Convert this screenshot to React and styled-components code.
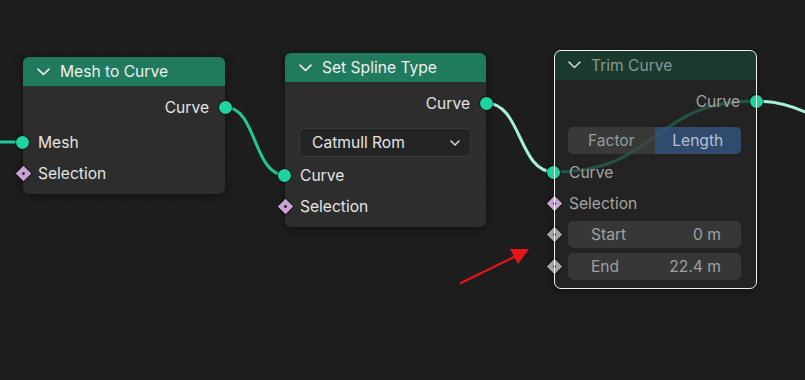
import React from "react";
import styled, { createGlobalStyle } from "styled-components";

const GlobalStyle = createGlobalStyle`
  html, body {
    margin: 0;
    padding: 0;
    background: #1d1d1d;
  }
  body {
    font-family: Inter, "Noto Sans", "DejaVu Sans", sans-serif;
  }
`;

const Canvas = styled.div`
  position: relative;
  width: 805px;
  height: 380px;
  overflow: hidden;
  background-color: #1d1d1d;
  background-image: radial-gradient(rgba(255, 255, 255, 0.022) 1px, transparent 1.3px);
  background-size: 26px 26px;
  background-position: 6px 10px;
`;

const Wires = styled.svg`
  position: absolute;
  inset: 0;
  z-index: 0;
`;

const Overlay = styled.svg`
  position: absolute;
  inset: 0;
  z-index: 3;
  pointer-events: none;
`;

const Node = styled.div`
  position: absolute;
  left: ${(p) => p.$x}px;
  top: ${(p) => p.$y}px;
  width: ${(p) => p.$w}px;
  z-index: 1;
  display: flex;
  flex-direction: column;
  border-radius: 6px;
  background: ${(p) => (p.$muted ? "rgba(38, 38, 38, 0.7)" : "#2d2d2d")};
  box-shadow: 0 2px 10px rgba(0, 0, 0, 0.45);
  padding-bottom: ${(p) => p.$pb || 6}px;
  &::after {
    content: "";
    display: ${(p) => (p.$selected ? "block" : "none")};
    position: absolute;
    inset: -0.5px;
    border: 1.5px solid #f2f2f2;
    border-radius: 7px;
    pointer-events: none;
  }
`;

const Header = styled.div`
  height: ${(p) => p.$h || 29}px;
  display: flex;
  align-items: center;
  gap: 10px;
  padding-left: 14px;
  border-radius: 6px 6px 0 0;
  background: ${(p) => (p.$muted ? "#1a3a30" : "#1f7a5e")};
  color: ${(p) => (p.$muted ? "#8a9791" : "#f0f0f0")};
  font-size: 15.6px;
  margin-bottom: 6px;
`;

const Chevron = ({ color }) => (
  <svg width="13" height="8" viewBox="0 0 13 8">
    <path d="M1 1.2 L6.5 6.5 L12 1.2" fill="none" stroke={color} strokeWidth="1.6" strokeLinecap="round" strokeLinejoin="round" />
  </svg>
);

const Row = styled.div`
  position: relative;
  height: 31px;
  display: flex;
  align-items: center;
  justify-content: ${(p) => (p.$out ? "flex-end" : "flex-start")};
  padding: ${(p) => (p.$out ? "0 16px 0 0" : "0 0 0 15px")};
  margin-top: ${(p) => p.$mt || 0}px;
  font-size: 15.6px;
  color: ${(p) => (p.$muted ? "#a3a3a3" : "#e4e4e4")};
`;

const Socket = styled.span`
  position: absolute;
  top: 50%;
  ${(p) => (p.$out ? "right: -7px;" : "left: -7px;")}
  width: 13px;
  height: 13px;
  margin-top: -6.5px;
  border-radius: 50%;
  background: #1fd2a2;
  box-shadow: 0 0 0 1px rgba(0, 0, 0, 0.55);
`;

const Diamond = styled.span`
  position: absolute;
  top: 50%;
  left: -5.5px;
  width: 11px;
  height: 11px;
  margin-top: -5.5px;
  transform: rotate(45deg);
  background: ${(p) => p.$color};
  box-shadow: 0 0 0 1px rgba(0, 0, 0, 0.5);
  display: flex;
  align-items: center;
  justify-content: center;
  &::after {
    content: "";
    width: 3px;
    height: 3px;
    border-radius: 50%;
    background: #2a2a2a;
  }
`;

const Widget = styled.div`
  position: relative;
  margin: ${(p) => p.$mt || 0}px 15px 0 14px;
  height: ${(p) => p.$h || 27}px;
  display: flex;
  align-items: stretch;
  border-radius: 5px;
`;

const Dropdown = styled.div`
  flex: 1;
  display: flex;
  align-items: center;
  justify-content: space-between;
  padding: 0 10px 0 12px;
  border-radius: 5px;
  background: #242424;
  border: 1px solid #3a3a3a;
  color: #e4e4e4;
  font-size: 15.6px;
`;

const Segment = styled.div`
  flex: 1;
  display: flex;
  align-items: center;
  justify-content: center;
  font-size: 15.6px;
  color: ${(p) => (p.$active ? "#b4c0cf" : "#9c9c9c")};
  background: ${(p) => (p.$active ? "rgba(52, 84, 128, 0.82)" : "rgba(72, 72, 72, 0.6)")};
  border-radius: ${(p) => (p.$first ? "5px 0 0 5px" : "0 5px 5px 0")};
`;

const Field = styled.div`
  flex: 1;
  display: flex;
  align-items: center;
  justify-content: space-between;
  padding: 0 20px 0 23px;
  border-radius: 5px;
  background: rgba(68, 68, 68, 0.62);
  color: #a0a0a0;
  font-size: 15.6px;
`;

const FieldSocket = styled(Diamond)`
  left: -19.5px;
`;

const Arrow = () => (
  <g>
    <line x1="461" y1="283" x2="516" y2="256" stroke="#e5161b" strokeWidth="2.2" strokeLinecap="round" />
    <polygon points="529,249 510,249 518,264" fill="#e5161b" />
  </g>
);

const TEAL = "#1fc99c";
const MINT = "#a6f0d8";

export default function App() {
  return (
    <>
      <GlobalStyle />
      <Canvas>
        <Wires width="805" height="380">
          <path d="M-5 142 L23 142" stroke={TEAL} strokeWidth="3" fill="none" />
          <path d="M225 107 C257 107 253 175 285 175" stroke={TEAL} strokeWidth="3" fill="none" />
          <path d="M486 103 C522 103 518 172 554 172" stroke={MINT} strokeWidth="3" fill="none" />
          <path d="M554 172 C660 172 650 101 756 101" stroke="#1db88f" strokeWidth="3" fill="none" />
          <path d="M756 101 C800 101 840 125 880 180" stroke={MINT} strokeWidth="3" fill="none" />
        </Wires>

        <Node $x={23} $y={57} $w={202} $pb={5}>
          <Header>
            <Chevron color="#f0f0f0" />
            Mesh to Curve
          </Header>
          <Row $out>
            Curve
            <Socket $out />
          </Row>
          <Row $mt={4}>
            Mesh
            <Socket />
          </Row>
          <Row>
            Selection
            <Diamond $color="#c9a3d6" />
          </Row>
        </Node>

        <Node $x={285} $y={53} $w={201} $pb={5}>
          <Header>
            <Chevron color="#f0f0f0" />
            Set Spline Type
          </Header>
          <Row $out>
            Curve
            <Socket $out />
          </Row>
          <Widget $mt={9} $h={29}>
            <Dropdown>
              Catmull Rom
              <svg width="10" height="6" viewBox="0 0 10 6">
                <path d="M1 1 L5 5 L9 1" fill="none" stroke="#dcdcdc" strokeWidth="1.5" strokeLinecap="round" strokeLinejoin="round" />
              </svg>
            </Dropdown>
          </Widget>
          <Row $mt={3}>
            Curve
            <Socket />
          </Row>
          <Row>
            Selection
            <Diamond $color="#c9a3d6" />
          </Row>
        </Node>

        <Node $x={554} $y={50} $w={202} $muted $selected $pb={8}>
          <Header $muted $h={30}>
            <Chevron color="#c8d0cc" />
            Trim Curve
          </Header>
          <Row $out $muted>
            Curve
            <Socket $out />
          </Row>
          <Widget $mt={10}>
            <Segment $first>Factor</Segment>
            <Segment $active>Length</Segment>
          </Widget>
          <Row $mt={3} $muted>
            Curve
            <Socket />
          </Row>
          <Row $muted>
            Selection
            <Diamond $color="#c9a3d6" />
          </Row>
          <Widget $mt={2}>
            <FieldSocket $color="#a5a5a5" />
            <Field>
              <span>Start</span>
              <span>0 m</span>
            </Field>
          </Widget>
          <Widget $mt={5}>
            <FieldSocket $color="#a5a5a5" />
            <Field>
              <span>End</span>
              <span>22.4 m</span>
            </Field>
          </Widget>
        </Node>

        <Overlay width="805" height="380">
          <Arrow />
        </Overlay>
      </Canvas>
    </>
  );
}
